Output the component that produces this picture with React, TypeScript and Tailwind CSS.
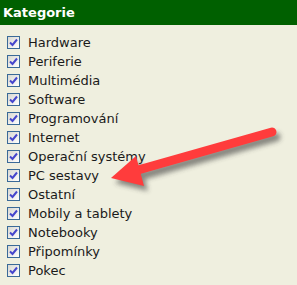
import React from 'react';

const categories = [
  'Hardware',
  'Periferie',
  'Multimédia',
  'Software',
  'Programování',
  'Internet',
  'Operační systémy',
  'PC sestavy',
  'Ostatní',
  'Mobily a tablety',
  'Notebooky',
  'Připomínky',
  'Pokec',
];

function CheckBox() {
  return (
    <span className="inline-flex h-[13px] w-[13px] shrink-0 items-center justify-center border border-[#3a6a98] bg-gradient-to-br from-[#d8d8d2] to-white">
      <svg width="9" height="9" viewBox="0 0 9 9">
        <path d="M1 4.5 L3.5 7 L8 1.5" fill="none" stroke="#4646cc" strokeWidth="2" />
      </svg>
    </span>
  );
}

export default function App() {
  return (
    <div className="relative h-[285px] w-[297px] overflow-hidden bg-[#efefdf] font-['DejaVu_Sans',Verdana,sans-serif]">
      <div className="flex h-[25px] items-center bg-[#006000] pl-[3px] text-[13px] font-bold text-white">
        Kategorie
      </div>
      <ul className="pt-[8px]">
        {categories.map((name) => (
          <li key={name} className="flex h-[19px] items-center gap-[8px] pl-[7px] text-[13px] text-[#1a1a1a]">
            <CheckBox />
            <span>{name}</span>
          </li>
        ))}
      </ul>

      {/* red annotation arrow */}
      <svg className="pointer-events-none absolute inset-0" width="297" height="285" viewBox="0 0 297 285">
        <defs>
          <filter id="sh" x="-20%" y="-50%" width="140%" height="200%">
            <feGaussianBlur stdDeviation="2.5" />
          </filter>
        </defs>
        <g transform="translate(4 5)" opacity="0.55" filter="url(#sh)" fill="#333" stroke="#333">
          <line x1="140" y1="170" x2="272" y2="132" strokeWidth="9" strokeLinecap="round" />
          <polygon points="111,178 136,156 144,186" stroke="none" />
        </g>
        <line x1="138" y1="170" x2="272" y2="132" stroke="#ff3c3c" strokeWidth="9" strokeLinecap="round" />
        <polygon points="111,178 136,156 144,186" fill="#ff3c3c" />
      </svg>
    </div>
  );
}
